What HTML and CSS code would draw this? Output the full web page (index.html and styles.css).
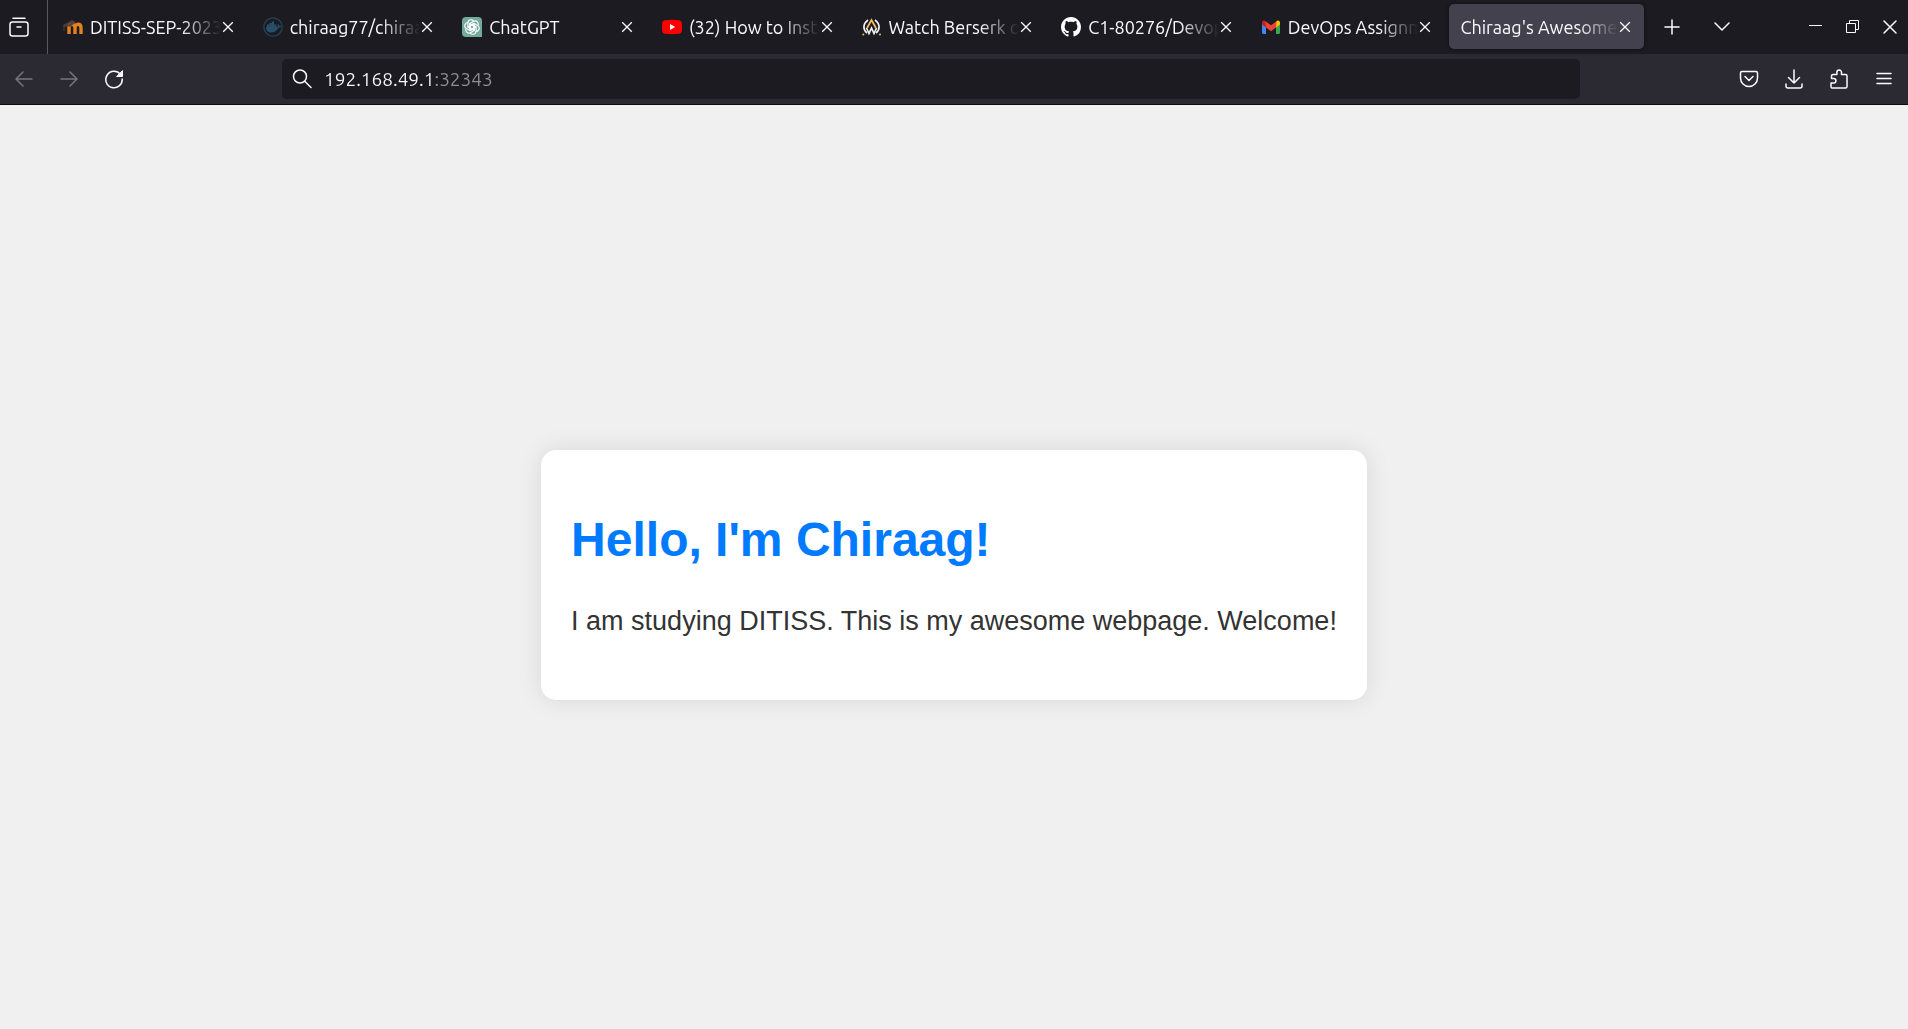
FILE: index.html
```html
<!DOCTYPE html>
<html lang="en">
<head>
<meta charset="utf-8">
<meta name="viewport" content="width=device-width, initial-scale=1">
<title>Chiraag's Awesome Webpage</title>
<link rel="stylesheet" href="styles.css">
</head>
<body>
<svg class="defs" aria-hidden="true">
  <symbol id="x" viewBox="0 0 12 12"><path d="M1.200 1.200 10.800 10.800M10.800 1.200 1.200 10.800"/></symbol>
</svg>
<header class="browser">
  <div class="tabbar">
    <button class="view" aria-label="Recent browsing">
      <svg class="icon" viewBox="0 0 20 20" stroke-width="1.700"><rect x="1" y="5" width="18" height="14" rx="2.500"/><path d="M4 1.200h12M8 10h4"/></svg>
    </button>
    <nav class="tabs" aria-label="Open tabs">
      <div class="tab">
        <svg class="favicon" viewBox="0 0 20 20"><path d="M0 8 9 3l4 2-5 4-7 1z" fill="#473c3a"/><path d="M1 9v5" stroke="#6d3c22" stroke-width="1"/><path d="M6 17v-6c0-5 6-5 6 0v6M12 11c0-5 6-5 6 0v6" fill="none" stroke="#e58220" stroke-width="3.400"/><path d="M4 8.500 10 4l2 2-5 4z" fill="#58413a"/></svg>
        <button class="title">DITISS-SEP-2023</button>
        <button class="close" aria-label="Close tab"><svg><use href="#x"/></svg></button>
      </div>
      <div class="tab">
        <svg class="favicon" viewBox="0 0 20 20"><circle cx="10" cy="10" r="9.200" fill="none" stroke="#244357" stroke-width="1.300"/><path d="M3 10h11c1 0 1-2 .5-3 1.200.4 1.500 1 1.700 1.700.8 0 1.500 0 2 .5-.5 1-1.400 1.300-2.600 1.300C14 14 11 15.500 8 15.500c-3.500 0-5-2.500-5-5.500zM4 7.500h2.200v2.500H4zM6.400 6h2.200v4H6.400zM8.800 4.500H11V10H8.800zM11.200 7.500h2.200V10h-2.200z" fill="#28506b"/></svg>
        <button class="title">chiraag77/chiraag</button>
        <button class="close" aria-label="Close tab"><svg><use href="#x"/></svg></button>
      </div>
      <div class="tab">
        <svg class="favicon" viewBox="0 0 20 20"><path d="M4 0h12a4 4 0 0 1 4 4v16H4a4 4 0 0 1-4-4V4a4 4 0 0 1 4-4z" fill="#74aa9c"/><g fill="none" stroke="#fff" stroke-width="1.100"><path id="petal" d="M8 11.200V6.400l3.700-2.100c3-1.500 5.800 1.900 4 4.700M8 6.800l4.200 2.400v4.600"/><use href="#petal" transform="rotate(60 10 10)"/><use href="#petal" transform="rotate(120 10 10)"/><use href="#petal" transform="rotate(180 10 10)"/><use href="#petal" transform="rotate(240 10 10)"/><use href="#petal" transform="rotate(300 10 10)"/></g></svg>
        <button class="title">ChatGPT</button>
        <button class="close" aria-label="Close tab"><svg><use href="#x"/></svg></button>
      </div>
      <div class="tab">
        <svg class="favicon" viewBox="0 0 20 20"><path d="M3 3.200q7-.8 14 0 2.500.2 2.800 2.800.4 4 0 8-.3 2.600-2.800 2.800-7 .8-14 0Q.5 16.600.2 14q-.4-4 0-8Q.5 3.400 3 3.200z" fill="#f00"/><path d="M8 7v6l5.200-3z" fill="#fff"/></svg>
        <button class="title">(32) How to Install</button>
        <button class="close" aria-label="Close tab"><svg><use href="#x"/></svg></button>
      </div>
      <div class="tab">
        <svg class="favicon" viewBox="0 0 20 20"><g fill="none" stroke="#f1f1ef" stroke-width="1.700"><path d="M6 3C.5 7 1 13 5 16M13 3c5.500 4 5 10 1 13"/><path d="M4.500 11 7 16.500 9.500 11l2.500 5.500 2.500-5.500"/></g><path d="M5 11 9.500 3 14 11" fill="none" stroke="#eebe63" stroke-width="1.800"/><circle cx="1.300" cy="17.500" r="1" fill="#eebe63"/><circle cx="18" cy="17.500" r="1" fill="#eebe63"/></svg>
        <button class="title">Watch Berserk online</button>
        <button class="close" aria-label="Close tab"><svg><use href="#x"/></svg></button>
      </div>
      <div class="tab">
        <svg class="favicon" viewBox="0 0 16 16"><path fill="#fff" d="M8 0C3.580 0 0 3.580 0 8c0 3.540 2.290 6.530 5.470 7.590.4.070.55-.17.55-.38 0-.19-.01-.82-.01-1.490-2.010.37-2.530-.49-2.690-.94-.09-.23-.48-.94-.82-1.130-.28-.15-.68-.52-.01-.53.63-.01 1.080.58 1.230.82.72 1.210 1.870.87 2.330.66.070-.52.28-.87.51-1.070-1.780-.2-3.640-.89-3.640-3.950 0-.87.31-1.590.82-2.150-.08-.2-.36-1.020.080-2.120 0 0 .67-.21 2.200.82.640-.18 1.320-.27 2-.27s1.360.090 2 .27c1.530-1.040 2.200-.82 2.200-.82.440 1.100.160 1.920.080 2.120.510.560.820 1.270.820 2.150 0 3.070-1.870 3.750-3.650 3.950.290.250.540.730.540 1.480 0 1.070-.01 1.930-.01 2.200 0 .210.150.460.550.380A8.010 8.010 0 0 0 16 8c0-4.420-3.580-8-8-8z"/></svg>
        <button class="title">C1-80276/Devops</button>
        <button class="close" aria-label="Close tab"><svg><use href="#x"/></svg></button>
      </div>
      <div class="tab">
        <svg class="favicon" viewBox="0 0 20 20"><path d="M1 5h4v12H2.500Q1 17 1 15.500z" fill="#4285f4"/><path d="M15 5h4v10.500Q19 17 17.500 17H15z" fill="#34a853"/><path d="M15 4.500C17 2.500 19 3.500 19 6v1.500L15 10.500z" fill="#fbbc04"/><path d="M5 4.500C3 2.500 1 3.500 1 6v1.500l4 3z" fill="#c5221f"/><path d="m4.500 4.200 5.500 4 5.500-4-.5 6.300-5 3.700-5-3.700z" fill="#ea4335"/></svg>
        <button class="title">DevOps Assignment</button>
        <button class="close" aria-label="Close tab"><svg><use href="#x"/></svg></button>
      </div>
      <div class="tab active">
        <button class="title">Chiraag's Awesome Webpage</button>
        <button class="close" aria-label="Close tab"><svg><use href="#x"/></svg></button>
      </div>
    </nav>
    <div class="tabtools">
      <button class="tool" aria-label="New tab"><svg class="icon" viewBox="0 0 20 20"><path d="M10 3v14M3 10h14"/></svg></button>
      <button class="tool" aria-label="List all tabs"><svg class="icon" viewBox="0 0 20 20"><path d="m3 6 7 7 7-7"/></svg></button>
    </div>
    <div class="window">
      <button aria-label="Minimize"><svg class="icon" viewBox="0 0 20 20" stroke-width="1"><path d="M3 8.500h13"/></svg></button>
      <button aria-label="Restore"><svg class="icon" viewBox="0 0 20 20" stroke-width="1"><path d="M3.500 6.500h9v9h-9zM6.500 6.500v-3h9v9h-3"/></svg></button>
      <button aria-label="Close window"><svg class="icon" viewBox="0 0 20 20" stroke-width="1.200"><path d="m4 4 12 12M16 4 4 16"/></svg></button>
    </div>
  </div>
  <div class="toolbar">
    <button class="tool" aria-label="Back" disabled><svg class="icon" viewBox="0 0 20 20"><path d="M18 10H2M9 3l-7 7 7 7"/></svg></button>
    <button class="tool" aria-label="Forward" disabled><svg class="icon" viewBox="0 0 20 20"><path d="M2 10h16M11 3l7 7-7 7"/></svg></button>
    <button class="tool" aria-label="Reload"><svg class="icon" viewBox="0 0 20 20" stroke-width="1.700"><path d="M16.500 5.500A8.200 8.200 0 1 0 18.200 10"/><path d="M18.500 2v5.500H13z" fill="currentColor" stroke-width="1"/></svg></button>
    <label class="address">
      <svg class="icon" viewBox="0 0 20 20" stroke-width="1.600"><circle cx="8" cy="7.500" r="6.500"/><path d="m13 12.500 6 6"/></svg>
      <input type="text" value="192.168.49.1:32343" aria-label="Address" spellcheck="false">
    </label>
    <button class="tool" aria-label="Save to Pocket"><svg class="icon" viewBox="0 0 20 20"><path d="M3 2.500h14q1.500 0 1.500 1.500v5a8.500 8.500 0 0 1-17 0V4q0-1.500 1.500-1.500z"/><path d="m6 7.500 4 4 4-4"/></svg></button>
    <button class="tool" aria-label="Downloads"><svg class="icon" viewBox="0 0 20 20"><path d="M10 1v13M4.500 8.500 10 14l5.500-5.500M2 15v2q0 2 2 2h12q2 0 2-2v-2"/></svg></button>
    <button class="tool" aria-label="Extensions"><svg class="icon" viewBox="0 0 20 20" stroke-width="1.700"><path d="M3 19h13.500q1.500 0 1.500-1.500V7q0-1.500-1.500-1.500h-4V3.300a2.300 2.300 0 0 0-4.600 0v2.200H4Q2.500 5.500 2.500 7v2.500h2.200a2.200 2.200 0 0 1 0 4.500H2v3.500Q2 19 3 19z"/></svg></button>
    <button class="tool" aria-label="Menu"><svg class="icon" viewBox="0 0 20 20"><path d="M3 4.500h14M3 9.500h14M3 14.500h14"/></svg></button>
  </div>
</header>
<main>
  <section class="card">
    <h1>Hello, I'm Chiraag!</h1>
    <p>I am studying DITISS. This is my awesome webpage. Welcome!</p>
  </section>
</main>
</body>
</html>
```
FILE: styles.css
```css
* { box-sizing: border-box; }

body {
  margin: 0;
  min-height: 100vh;
  display: flex;
  flex-direction: column;
  background: #f0f0f0;
  font-family: "Liberation Sans", Arial, sans-serif;
}

button {
  display: flex;
  align-items: center;
  justify-content: center;
  margin: 0;
  padding: 0;
  border: 0;
  background: none;
  color: inherit;
  font: inherit;
}

.defs { display: none; }

.browser {
  color: #fbfbfe;
  font: 18px/24px Ubuntu, "Noto Sans", sans-serif;
  border-bottom: 1px solid #0c0c0d;
}

.icon {
  flex: none;
  width: 20px;
  height: 20px;
  fill: none;
  stroke: currentColor;
  stroke-width: 1.5;
  stroke-linecap: round;
  stroke-linejoin: round;
}

.icon[stroke-width="1"] { stroke-width: 1; stroke-linecap: butt; stroke-linejoin: miter; }

.tabbar {
  display: flex;
  height: 54px;
  background: #1c1b22;
}

.view {
  width: 48px;
  padding-right: 9px;
  border-right: 1px solid #58575e;
}

.tabs {
  flex: 1;
  min-width: 0;
  display: flex;
  gap: 5px;
  padding: 4px 0 5px 4px;
}

.tab {
  flex: 1 1 0;
  min-width: 0;
  display: flex;
  align-items: center;
  padding: 0 12px 0 11px;
  border-radius: 5px;
}

.tab.active {
  background: #42414d;
  box-shadow: 0 0 4px #0008;
}

.favicon {
  flex: none;
  width: 20px;
  height: 20px;
  margin-right: 7px;
}

.title {
  flex: 1;
  min-width: 0;
  overflow: hidden;
  white-space: nowrap;
  justify-content: flex-start;
  mask-image: linear-gradient(to left, transparent, #000 40px);
}

.close {
  flex: none;
  width: 14px;
  height: 24px;
}

.close svg {
  width: 12px;
  height: 12px;
  stroke: currentColor;
  stroke-width: 1.3;
}

.tabtools {
  display: flex;
  align-items: center;
  gap: 5px;
  margin: 0 53px 0 5px;
}

.tool {
  flex: none;
  width: 45px;
  height: 40px;
}

.tool:disabled { color: #76757c; }

.window { display: flex; }

.window button { width: 37px; }

.toolbar {
  display: flex;
  align-items: center;
  height: 50px;
  padding: 0 2px 0 1px;
  background: #2b2a33;
}

.address {
  flex: 1;
  min-width: 0;
  display: flex;
  align-items: center;
  gap: 12px;
  height: 40px;
  margin: 0 146px;
  padding: 0 10px;
  border-radius: 5px;
  background: #1c1b22;
}

/* the port is dimmed after the host part */
.address input {
  flex: 1;
  min-width: 0;
  height: 40px;
  padding: 0;
  border: 0;
  outline: 0;
  font: 19px/24px Ubuntu, "Noto Sans", sans-serif;
  color: transparent;
  caret-color: #fbfbfe;
  background: linear-gradient(to right, #fbfbfe 111px, #8f8f95 111px);
  background-clip: text;
}

/* extra top padding sets the card a little below the middle */
main {
  flex: 1;
  display: flex;
  align-items: center;
  justify-content: center;
  padding-top: 16px;
}

.card {
  padding: 30px;
  border-radius: 15px;
  background: #fff;
  box-shadow: 0 0 24px #0000001a;
}

h1 {
  margin: 32px 0 33px;
  font-size: 48px;
  line-height: 55px;
  color: #007bff;
}

p {
  margin: 0 0 27px;
  font-size: 27px;
  line-height: 43px;
  color: #333;
}
```
